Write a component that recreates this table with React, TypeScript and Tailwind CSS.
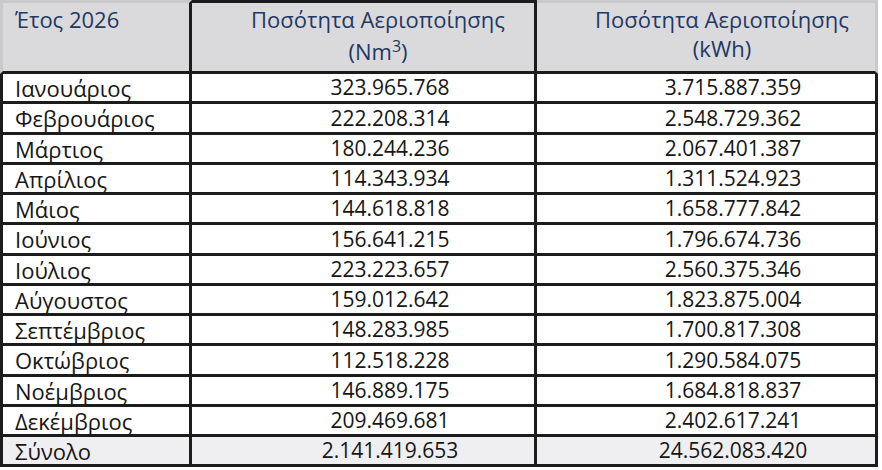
const rows: [string, string, string][] = [
    ["Ιανουάριος", "323.965.768", "3.715.887.359"],
    ["Φεβρουάριος", "222.208.314", "2.548.729.362"],
    ["Μάρτιος", "180.244.236", "2.067.401.387"],
    ["Απρίλιος", "114.343.934", "1.311.524.923"],
    ["Μάιος", "144.618.818", "1.658.777.842"],
    ["Ιούνιος", "156.641.215", "1.796.674.736"],
    ["Ιούλιος", "223.223.657", "2.560.375.346"],
    ["Αύγουστος", "159.012.642", "1.823.875.004"],
    ["Σεπτέμβριος", "148.283.985", "1.700.817.308"],
    ["Οκτώβριος", "112.518.228", "1.290.584.075"],
    ["Νοέμβριος", "146.889.175", "1.684.818.837"],
    ["Δεκέμβριος", "209.469.681", "2.402.617.241"],
]

export default function App() {
    return (
        <div className="w-[882px] h-[470px] bg-white text-[#161616] text-[22px] leading-none" style={{ fontFamily: '"Open Sans", "Noto Sans", sans-serif' }}>
            <div className="grid grid-cols-[192px_345px_341px]">
                {/* header */}
                <div className="h-[74px] bg-[#dadadc] border-t-[3px] border-l-[3px] border-t-[#c9c9cb] border-l-[#c9c9cb] border-r-[3px] border-r-[#1c1c1c] border-b-[3px] border-b-[#1c1c1c] pl-[12px] pt-[5px] text-[#1f3864]">
                    Έτος 2026
                </div>
                <div className="h-[74px] bg-[#dadadc] border-t-[3px] border-t-[#1c1c1c] border-r-[3px] border-r-[#1c1c1c] border-b-[3px] border-b-[#1c1c1c] pt-[5px] pl-[30px] flex flex-col items-center gap-[10px] text-[#1f3864]">
                    <span>Ποσότητα Αεριοποίησης</span>
                    <span>(Nm<span className="relative -top-[8px] text-[16px]">3</span>)</span>
                </div>
                <div className="h-[74px] bg-[#dadadc] border-t-[3px] border-t-[#c9c9cb] border-r-[3px] border-r-[#c9c9cb] border-b-[3px] border-b-[#1c1c1c] pt-[5px] pl-[32px] flex flex-col items-center gap-[7px] text-[#1f3864]">
                    <span>Ποσότητα Αεριοποίησης</span>
                    <span>(kWh)</span>
                </div>

                {rows.map(([m, a, b], i) => (
                    <Row key={m} month={m} a={a} b={b} tall={i % 4 === 1} />
                ))}
                <Row month="Σύνολο" a="2.141.419.653" b="24.562.083.420" total />
            </div>
        </div>
    )
}

function Row({ month, a, b, total, tall }: { month: string; a: string; b: string; total?: boolean; tall?: boolean }) {
    const bg = total ? "bg-[#efeff1]" : "bg-white"
    const h = tall ? "h-[31px]" : "h-[30px]"
    return (
        <>
            <div className={`${h} ${bg} border-l-[3px] border-r-[3px] border-b-[3px] border-[#1c1c1c] pl-[12px] flex items-center`}>
                {month}
            </div>
            <div className={`${h} ${bg} border-r-[3px] border-b-[3px] border-[#1c1c1c] pl-[54px] flex items-center justify-center text-[21px]`}>
                {a}
            </div>
            <div className={`${h} ${bg} border-r-[3px] border-b-[3px] border-[#1c1c1c] pl-[54px] flex items-center justify-center text-[21px]`}>
                {b}
            </div>
        </>
    )
}
